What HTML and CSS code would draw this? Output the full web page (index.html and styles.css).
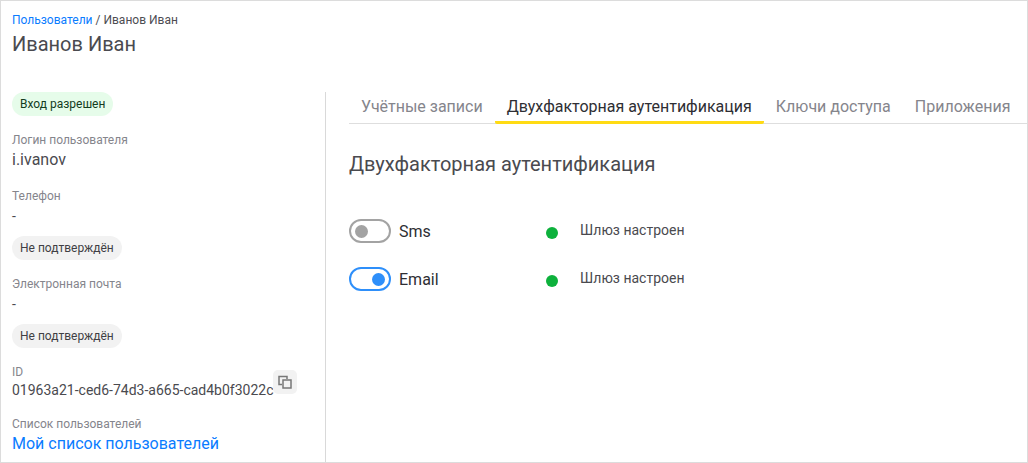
FILE: index.html
```html
<!DOCTYPE html>
<html lang="ru">
<head>
<meta charset="utf-8">
<title>Иванов Иван</title>
<link rel="stylesheet" href="styles.css">
</head>
<body>
<div class="page">
  <header class="head">
    <div class="crumbs"><a class="link" href="#">Пользователи</a><span class="sep"> / </span>Иванов Иван</div>
    <h1 class="title">Иванов Иван</h1>
  </header>
  <div class="main">
    <aside class="side">
      <span class="chip chip-ok">Вход разрешен</span>
      <div class="field field-login">
        <div class="label label-gap">Логин пользователя</div>
        <div class="value value-big">i.ivanov</div>
      </div>
      <div class="field field-phone">
        <div class="label label-gap">Телефон</div>
        <div class="value">-</div>
        <span class="chip chip-grey">Не подтверждён</span>
      </div>
      <div class="field field-mail">
        <div class="label label-gap">Электронная почта</div>
        <div class="value">-</div>
        <span class="chip chip-grey">Не подтверждён</span>
      </div>
      <div class="field field-id">
        <div class="label">ID</div>
        <div class="id-row">
          <div class="value">01963a21-ced6-74d3-a665-cad4b0f3022c</div>
          <button class="copy" type="button" aria-label="Копировать">
            <svg width="14" height="14" viewBox="0 0 14 14" fill="none" stroke="#777" stroke-width="1.500">
              <path d="M9 4V1.500H1V9.500H4"/>
              <rect x="5" y="5" width="8" height="8"/>
            </svg>
          </button>
        </div>
      </div>
      <div class="field field-list">
        <div class="label label-gap">Список пользователей</div>
        <a class="link list-link" href="#">Мой список пользователей</a>
      </div>
    </aside>
    <section class="content">
      <nav class="tabs">
        <a class="tab" href="#">Учётные записи</a>
        <a class="tab tab-active" href="#">Двухфакторная аутентификация</a>
        <a class="tab" href="#">Ключи доступа</a>
        <a class="tab" href="#">Приложения</a>
      </nav>
      <h2 class="section-title">Двухфакторная аутентификация</h2>
      <div class="rows">
        <div class="row">
          <div class="row-left">
            <span class="toggle"><span class="knob"></span></span>
            <span class="row-name">Sms</span>
          </div>
          <span class="dot"></span>
          <span class="status">Шлюз настроен</span>
        </div>
        <div class="row">
          <div class="row-left">
            <span class="toggle toggle-on"><span class="knob"></span></span>
            <span class="row-name">Email</span>
          </div>
          <span class="dot"></span>
          <span class="status">Шлюз настроен</span>
        </div>
      </div>
    </section>
  </div>
</div>
</body>
</html>
```
FILE: styles.css
```css
* { box-sizing: border-box; }
html, body { margin: 0; padding: 0; }
body {
  width: 1028px;
  height: 463px;
  overflow: hidden;
  background: #fff;
  font-family: Roboto, "Liberation Sans", sans-serif;
  color: #4a4a4f;
}
.page {
  width: 1028px;
  height: 463px;
  border: 1px solid #dcdcdc;
  display: flex;
  flex-direction: column;
  overflow: hidden;
}
.head { padding: 12px 11px 0; height: 91px; }
.crumbs { font-size: 12px; line-height: 14px; color: #4d4d52; }
.link { color: #0a7cff; text-decoration: none; }
.title {
  margin: 5px 0 0;
  font-size: 20px;
  line-height: 24px;
  font-weight: 400;
  color: #4a4a4f;
}
.main { display: flex; flex: 1; min-height: 0; }
.side {
  width: 325px;
  flex: none;
  padding-left: 11px;
  border-right: 1px solid #d9d9d9;
}
.chip {
  display: inline-block;
  height: 24px;
  padding: 0 8px;
  border-radius: 12px;
  font-size: 12px;
  line-height: 24px;
  vertical-align: top;
}
.chip-ok { background: #e6fcea; color: #143c1e; }
.chip-grey { background: #f2f2f2; color: #3f3f44; }
.label { font-size: 12px; line-height: 16px; color: #85858c; }
.label-gap { margin-bottom: 2px; }
.value { font-size: 14px; line-height: 20px; color: #4a4a4f; }
.value-big { font-size: 16px; line-height: 20px; }
.field-login { margin-top: 16px; }
.field-phone { margin-top: 18px; }
.field-phone .chip, .field-mail .chip { margin-top: 10px; display: block; width: max-content; }
.field-mail { margin-top: 16px; }
.field-id { margin-top: 16px; }
.id-row { display: flex; align-items: flex-start; height: 20px; }
.copy {
  width: 24px;
  height: 24px;
  margin-top: -10px;
  margin-left: -1px;
  padding: 0;
  border: 0;
  border-radius: 5px;
  background: #f2f2f2;
  display: flex;
  align-items: center;
  justify-content: center;
  flex: none;
}
.field-list { margin-top: 16px; }
.list-link { display: block; font-size: 16px; line-height: 20px; }
.content { flex: 1; min-width: 0; padding-left: 23px; }
.tabs {
  display: flex;
  height: 32px;
  border-bottom: 1px solid #dedede;
}
.tab {
  height: 32px;
  padding: 5px 12px 0;
  font-size: 16px;
  line-height: 20px;
  color: #85858c;
  text-decoration: none;
  white-space: nowrap;
}
.tab-active {
  color: #2e2e33;
  border-bottom: 3px solid #ffdb13;
  border-radius: 2px;
}
.section-title {
  margin: 28px 0 0;
  font-size: 20px;
  line-height: 24px;
  font-weight: 400;
  color: #4a4a4f;
}
.rows { margin-top: 43px; display: flex; flex-direction: column; gap: 24px; }
.row { display: flex; align-items: center; height: 24px; }
.row-left { width: 197px; display: flex; align-items: center; gap: 8px; }
.toggle {
  width: 42px;
  height: 24px;
  border: 2px solid #a3a3a3;
  border-radius: 12px;
  display: flex;
  align-items: center;
  padding: 0 4px;
  flex: none;
}
.knob { width: 13px; height: 13px; border-radius: 50%; background: #a3a3a3; }
.toggle-on { border-color: #2e8ffa; justify-content: flex-end; }
.toggle-on .knob { background: #2e8ffa; }
.row-name { font-size: 16px; line-height: 20px; color: #2e2e33; margin-top: 2px; }
.dot { width: 12px; height: 12px; border-radius: 50%; background: #0db13c; margin-top: 4px; flex: none; }
.status { margin-left: 22px; font-size: 14px; line-height: 20px; color: #4a4a4f; margin-top: -2px; }
```
